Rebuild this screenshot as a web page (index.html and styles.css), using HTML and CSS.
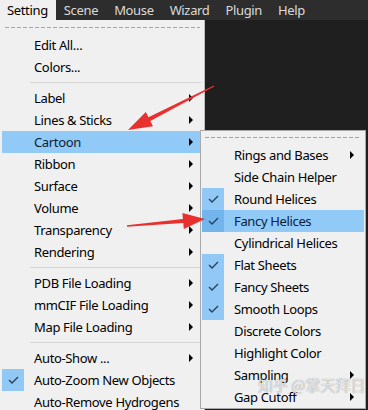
FILE: index.html
```html
<!DOCTYPE html>
<html lang="en">
<head>
  <meta charset="UTF-8">
  <title>Setting menu</title>
  <link rel="stylesheet" href="styles.css">
</head>
<body>
  <div class="menubar">
    <span class="bar-item open">Setting</span>
    <span class="bar-item">Scene</span>
    <span class="bar-item">Mouse</span>
    <span class="bar-item">Wizard</span>
    <span class="bar-item">Plugin</span>
    <span class="bar-item">Help</span>
  </div>

  <div class="workspace">
    <div class="menu main-menu">
      <div class="tearoff"><span></span></div>
      <div class="item"><span class="check"></span><span class="label">Edit All...</span></div>
      <div class="item"><span class="check"></span><span class="label">Colors...</span></div>
      <div class="sep"></div>
      <div class="item"><span class="check"></span><span class="label">Label</span><span class="arrow"></span></div>
      <div class="item"><span class="check"></span><span class="label">Lines &amp; Sticks</span><span class="arrow"></span></div>
      <div class="item active"><span class="check"></span><span class="label">Cartoon</span><span class="arrow"></span></div>
      <div class="item"><span class="check"></span><span class="label">Ribbon</span><span class="arrow"></span></div>
      <div class="item"><span class="check"></span><span class="label">Surface</span><span class="arrow"></span></div>
      <div class="item"><span class="check"></span><span class="label">Volume</span><span class="arrow"></span></div>
      <div class="item"><span class="check"></span><span class="label">Transparency</span><span class="arrow"></span></div>
      <div class="item"><span class="check"></span><span class="label">Rendering</span><span class="arrow"></span></div>
      <div class="sep"></div>
      <div class="item"><span class="check"></span><span class="label">PDB File Loading</span><span class="arrow"></span></div>
      <div class="item"><span class="check"></span><span class="label">mmCIF File Loading</span><span class="arrow"></span></div>
      <div class="item"><span class="check"></span><span class="label">Map File Loading</span><span class="arrow"></span></div>
      <div class="sep"></div>
      <div class="item"><span class="check"></span><span class="label">Auto-Show ...</span><span class="arrow"></span></div>
      <div class="item checked"><span class="check"><svg width="11" height="8" viewBox="0 0 11 8"><polyline points="1,4 4,7 10,1" /></svg></span><span class="label">Auto-Zoom New Objects</span></div>
      <div class="item"><span class="check"></span><span class="label">Auto-Remove Hydrogens</span></div>
    </div>

    <div class="menu sub-menu">
      <div class="tearoff"><span></span></div>
      <div class="item"><span class="check"></span><span class="label">Rings and Bases</span><span class="arrow"></span></div>
      <div class="item"><span class="check"></span><span class="label">Side Chain Helper</span></div>
      <div class="item checked"><span class="check"><svg width="11" height="8" viewBox="0 0 11 8"><polyline points="1,4 4,7 10,1" /></svg></span><span class="label">Round Helices</span></div>
      <div class="item checked active"><span class="check"><svg width="11" height="8" viewBox="0 0 11 8"><polyline points="1,4 4,7 10,1" /></svg></span><span class="label">Fancy Helices</span></div>
      <div class="item"><span class="check"></span><span class="label">Cylindrical Helices</span></div>
      <div class="item checked"><span class="check"><svg width="11" height="8" viewBox="0 0 11 8"><polyline points="1,4 4,7 10,1" /></svg></span><span class="label">Flat Sheets</span></div>
      <div class="item checked"><span class="check"><svg width="11" height="8" viewBox="0 0 11 8"><polyline points="1,4 4,7 10,1" /></svg></span><span class="label">Fancy Sheets</span></div>
      <div class="item checked"><span class="check"><svg width="11" height="8" viewBox="0 0 11 8"><polyline points="1,4 4,7 10,1" /></svg></span><span class="label">Smooth Loops</span></div>
      <div class="item"><span class="check"></span><span class="label">Discrete Colors</span></div>
      <div class="item"><span class="check"></span><span class="label">Highlight Color</span></div>
      <div class="item"><span class="check"></span><span class="label">Sampling</span><span class="arrow"></span></div>
      <div class="item"><span class="check"></span><span class="label">Gap Cutoff</span><span class="arrow"></span></div>
    </div>

    <!-- red annotation arrows drawn on top of the screenshot -->
    <svg class="annotations" width="368" height="390" viewBox="0 20 368 390">
      <polygon points="213.7,85.4 148.5,117.3 145.8,112.0 128,130 153.0,126.2 150.3,120.9 214.3,86.6" />
      <polygon points="126.9,225.3 182.9,219.0 182.4,213.0 205,219 183.8,229.0 183.3,223.0 127.1,226.7" />
    </svg>

    <div class="watermark">知乎 @掌天拜日</div>
  </div>
</body>
</html>
```

FILE: styles.css
```css
body {
  margin: 0;
  background: #1f1f1f;
  font-family: 'Noto Sans', 'Noto Sans CJK SC', sans-serif;
  font-size: 13px;
  letter-spacing: -0.35px;
  overflow: hidden;
}
.menubar {
  display: flex;
  height: 20px;
  background: #2d2d2d;
}
.bar-item {
  display: flex;
  align-items: center;
  padding: 0 8px;
  color: #dadada;
}
.bar-item.open {
  padding-left: 7px;
  background: #f0f0f0;
  color: #000;
}
.workspace {
  position: relative;
  height: 390px;
}
.menu {
  background: #f0f0f0;
  border: 1px solid #b8b8b8;
  padding: 0 1px;
  color: #000;
}
.main-menu {
  width: 201px;
  border-color: #f0f0f0 #bdbdbd #f0f0f0 #f0f0f0;
  border-top: 0;
  padding-top: 1px;
}
.sub-menu {
  position: absolute;
  left: 200px;
  top: 110px;
  width: 162px;
  border-color: #a9a9a9;
}
.tearoff {
  padding: 6px 3px;
}
.tearoff span {
  display: block;
  height: 1px;
  background: repeating-linear-gradient(to right, #a4a4a4 0 4px, transparent 4px 6px);
}
.item {
  display: flex;
  align-items: center;
  height: 22px;
}
.item.active {
  background: #91c9f7;
  color: #0b2239;
}
.check {
  width: 22px;
  height: 22px;
  margin-right: 10px;
  display: flex;
  align-items: center;
  justify-content: center;
}
.checked .check {
  background: #91c8f6;
}
.checked.active .check {
  background: #72b4ec;
}
.check polyline {
  fill: none;
  stroke: #2a3f55;
  stroke-width: 1.3;
}
.label {
  flex: 1;
  white-space: nowrap;
}
.arrow {
  width: 0;
  height: 0;
  margin-right: 10px;
  border-left: 4px solid #000;
  border-top: 4px solid transparent;
  border-bottom: 4px solid transparent;
}
.sep {
  height: 1px;
  margin: 4px 2px 4px 28px;
  background: #d5d5d5;
}
.annotations {
  position: absolute;
  left: 0;
  top: 0;
}
.annotations polygon {
  fill: #e8312f;
}
.watermark {
  position: absolute;
  left: 258px;
  top: 354px;
  font-family: 'Noto Sans CJK SC', sans-serif;
  font-size: 15px;
  letter-spacing: 0;
  color: rgba(255, 255, 255, 0.75);
  text-shadow: 0 0 1px rgba(90, 90, 90, 0.8);
}
```
